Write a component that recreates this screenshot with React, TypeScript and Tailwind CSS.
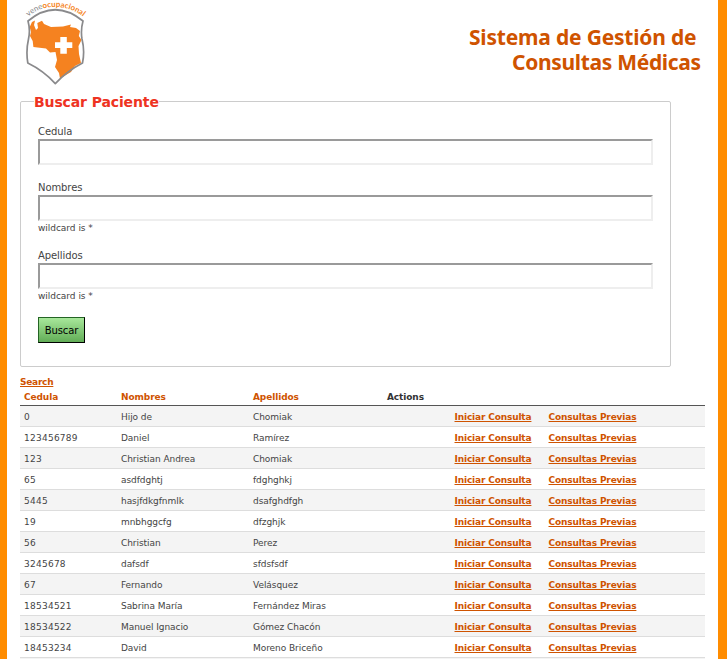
type Patient = [string, string, string];

const patients: Patient[] = [
  ['0', 'Hijo de', 'Chomiak'],
  ['123456789', 'Daniel', 'Ramírez'],
  ['123', 'Christian Andrea', 'Chomiak'],
  ['65', 'asdfdghtj', 'fdghghkj'],
  ['5445', 'hasjfdkgfnmlk', 'dsafghdfgh'],
  ['19', 'mnbhggcfg', 'dfzghjk'],
  ['56', 'Christian', 'Perez'],
  ['3245678', 'dafsdf', 'sfdsfsdf'],
  ['67', 'Fernando', 'Velásquez'],
  ['18534521', 'Sabrina María', 'Fernández Miras'],
  ['18534522', 'Manuel Ignacio', 'Gómez Chacón'],
  ['18453234', 'David', 'Moreno Briceño'],
  ['', '', ''],
];

const columns = 'grid grid-cols-[97px_132px_134px_67.5px_94px_1fr] items-center pl-1';

function Logo() {
  return (
    <svg width="64" height="88" viewBox="24 0 64 88" className="ml-1 shrink-0">
      <defs>
        <path id="logo-arc" d="M28.5 16.6C41 4.5 67 2.5 84 17.5" />
      </defs>
      <text fontFamily='"Lato", sans-serif' fontSize="7.8" fill="#8a8a8c">
        <textPath href="#logo-arc" textLength="59" lengthAdjust="spacing">
          vene<tspan fill="#f58220" fontWeight="700">ocupacional</tspan>
        </textPath>
      </text>
      <path
        d="M32 22L35 20.5L34 25L36 30L38 28L37.3 23L42 20.7L44 24L51 27L63 26.5L71 24.5L70 27L76 28L80 31L78.8 36L81.5 40L78.5 46L79 54L81 63L75 66L71 72L60 78.5L59 73L55 67L57 60L55.5 52L50 52.5L46 48.5L33.4 47L32.7 41L30 36L31 32L29.7 27Z"
        fill="#f58220"
      />
      <path d="M60.3 37H66.8V42.2H72.3V48H66.8V53.7H60.3V48H55V42.2H60.3Z" fill="#fff" />
      <path
        d="M28 21Q55 -1.5 83 21Q80.5 30 82 39Q85 51 82.5 63Q67 71 55.3 83.6Q44 71 27.8 63Q25.8 51 28.5 39Q30.5 30 28 21Z"
        fill="none"
        stroke="#8a8a8c"
        strokeWidth="1.7"
        strokeLinejoin="round"
      />
    </svg>
  );
}

function Field({ label, hint }: { label: string; hint?: string }) {
  return (
    <div className={hint ? 'h-[68px]' : 'h-[56px]'}>
      <label className="block h-[15px] text-[10px] leading-[15px] tracking-[-0.08px]">{label}</label>
      <input className="block h-[26px] w-[615px] border-2 border-t-[#9a9a9a] border-r-[#eeeeee] border-b-[#eeeeee] border-l-[#9a9a9a] bg-white outline-none" />
      {hint && <p className="h-[14px] text-[9px] leading-[14px] tracking-[-0.03px]">{hint}</p>}
    </div>
  );
}

export default function App() {
  return (
    <div className="relative h-[659px] w-[727px] overflow-hidden border-r-[9px] border-l-[7px] border-[#ff8c00] bg-white pl-[13px] font-['DejaVu_Sans',sans-serif] text-[#444]">
      <header className="flex h-[92px] items-start justify-between">
        <Logo />
        <h1 className="mt-[25px] mr-[13px] w-[236px] font-['Noto_Sans',sans-serif] text-[21px] leading-[25px] font-bold whitespace-nowrap text-[#cf5300]">
          <span className="block tracking-[-0.2px]">Sistema de Gestión de</span>
          <span className="ml-[43px] block tracking-[-0.32px]">Consultas Médicas</span>
        </h1>
      </header>

      <fieldset className="h-[275px] w-[650px] rounded-[2px] border border-[#ccc] px-[17px]">
        <legend className="-ml-1 h-[18px] pt-px text-[14px] leading-[18px] font-bold tracking-[-0.12px] text-[#ee3322]">
          Buscar Paciente
        </legend>
        <div className="pt-[14px]">
          <Field label="Cedula" />
          <Field label="Nombres" hint="wildcard is *" />
          <Field label="Apellidos" hint="wildcard is *" />
          <button className="mt-[1px] h-[26px] w-[47px] border border-t-[#246424] border-r-black border-b-black border-l-[#246424] bg-linear-to-b from-[#a8e89b] to-[#62ad57] pt-px text-[10px] leading-[23px] tracking-[-0.08px] text-black">
            Buscar
          </button>
        </div>
      </fieldset>

      <a className="mt-[9px] block h-[13px] text-[9px] leading-[13px] font-bold tracking-[-0.25px] text-[#cf5300] underline">Search</a>
      <div className="w-[685px] text-[9px] whitespace-nowrap">
        <div className={`${columns} h-[17px] border-b border-[#555] pt-px font-bold tracking-[-0.1px] text-[#cf5300]`}>
          <span>Cedula</span>
          <span>Nombres</span>
          <span>Apellidos</span>
          <span className="text-[#333]">Actions</span>
        </div>
        {patients.map((p, i) => (
          <div key={i} className={`${columns} h-[21px] border-b border-[#ddd] pt-[3px] ${i % 2 ? 'bg-white' : 'bg-[#f4f4f4]'}`}>
            <span className="tracking-[0.25px]">{p[0]}</span>
            <span className="tracking-[-0.06px]">{p[1]}</span>
            <span className="tracking-[-0.06px]">{p[2]}</span>
            <span />
            <a className="font-bold tracking-[-0.15px] text-[#cf5300] underline">{p[0] && 'Iniciar Consulta'}</a>
            <a className="font-bold tracking-[-0.15px] text-[#cf5300] underline">{p[0] && 'Consultas Previas'}</a>
          </div>
        ))}
      </div>
      <i className="absolute top-[641px] -left-[7px] h-[18px] w-px bg-[#0878ff]" />
      <i className="absolute top-[641px] -right-[7px] h-[18px] w-px bg-[#0878ff]" />
    </div>
  );
}
